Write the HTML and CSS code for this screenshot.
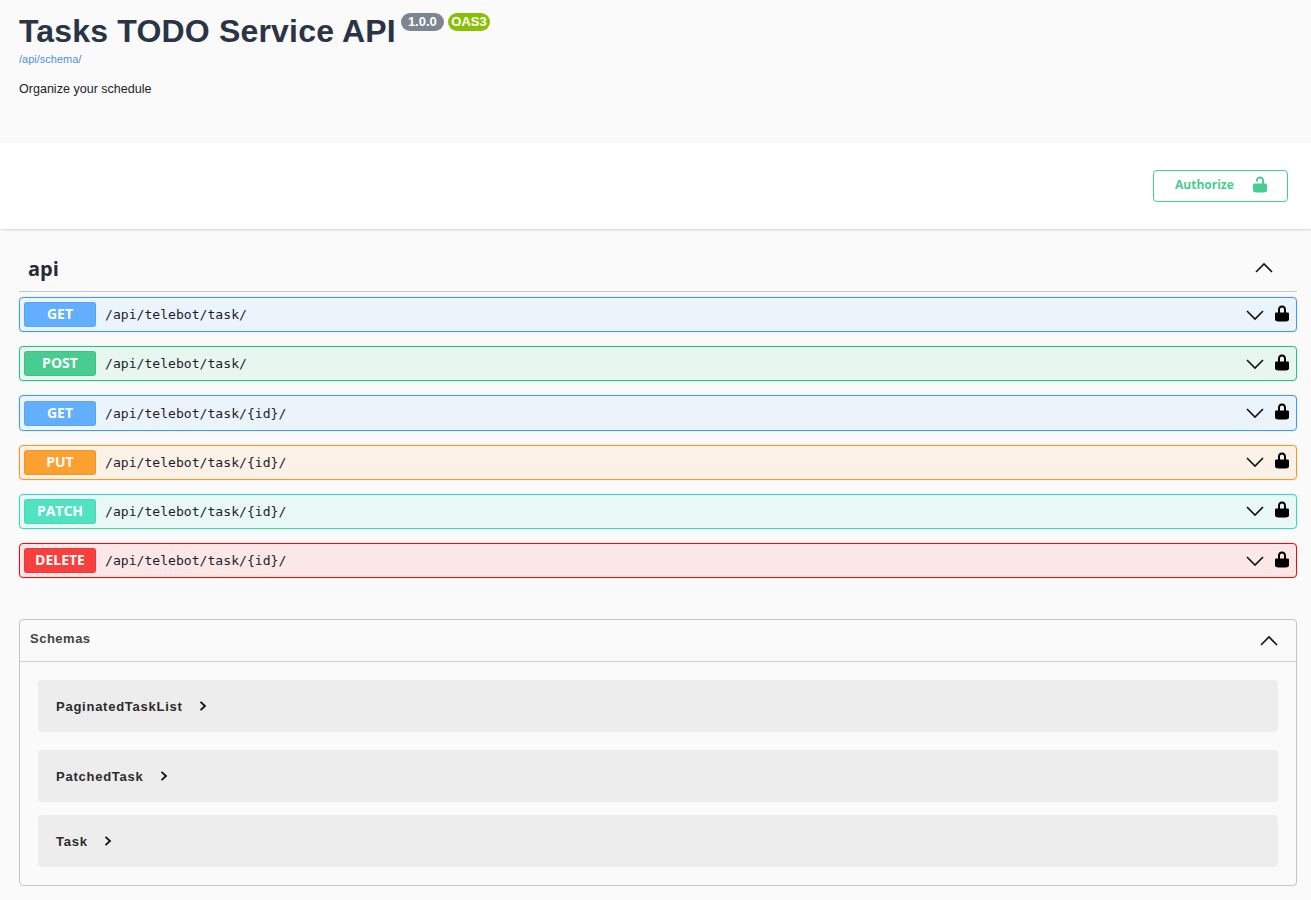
FILE: index.html
```html
<!DOCTYPE html>
<html>
<head>
  <title>Tasks TODO Service API</title>
  <link rel="stylesheet" href="styles.css">
</head>
<body>
  <svg class="sprites" width="0" height="0">
    <symbol id="locked" viewBox="0 0 20 20"><path d="M15.8 8.5H14V6C14 3.2 12.7 1.5 10 1.5 7.3 1.5 6 3.2 6 6V8.5H4.2C3.6 8.5 3 9.1 3 9.7V15.6c0 .5.4 1.1 1 1.3l1.1.3c.5.2 1.3.3 1.9.3h6c.6 0 1.4-.1 1.9-.3l1.1-.3c.6-.2 1-.8 1-1.3V9.7C17 9.1 16.4 8.5 15.8 8.5zM12 8.5H8V5.6C8 4.2 8.8 3.5 10 3.5s2 .7 2 2.1V8.5z"/></symbol>
    <symbol id="unlocked" viewBox="0 0 20 20"><path d="M15.8 8.5H14V6C14 3.2 12.7 1.5 10 1.5 7.3 1.5 6 3.2 6 6V6.5h2V5.6C8 4.2 8.8 3.5 10 3.5s2 .7 2 2.1V8.5H4.2C3.6 8.5 3 9.1 3 9.7V15.6c0 .5.4 1.1 1 1.3l1.1.3c.5.2 1.3.3 1.9.3h6c.6 0 1.4-.1 1.9-.3l1.1-.3c.6-.2 1-.8 1-1.3V9.7C17 9.1 16.4 8.5 15.8 8.5z"/></symbol>
    <symbol id="up" viewBox="0 0 20 20"><path d="M2 14 L10 6 L18 14"/></symbol>
    <symbol id="down" viewBox="0 0 20 20"><path d="M2 6 L10 14 L18 6"/></symbol>
    <symbol id="right" viewBox="0 0 20 20"><path d="M7.5 5.8 L12 10 L7.5 14.2"/></symbol>
  </svg>

  <section class="info">
    <div class="title-row">
      <h1>Tasks TODO Service API</h1>
      <span class="badge version">1.0.0</span>
      <span class="badge oas">OAS3</span>
    </div>
    <a class="schema-link" href="#">/api/schema/</a>
    <p class="description">Organize your schedule</p>
  </section>

  <section class="auth-bar">
    <button class="authorize" type="button">
      <span>Authorize</span>
      <svg width="20" height="20"><use href="#unlocked"/></svg>
    </button>
  </section>

  <section class="tag-section">
    <div class="tag-head">
      <h2>api</h2>
      <svg class="arrow" width="20" height="20"><use href="#up"/></svg>
    </div>

    <div class="op get">
      <span class="method">GET</span>
      <span class="path">/api/telebot/task/</span>
      <svg class="arrow" width="20" height="20"><use href="#down"/></svg>
      <svg class="lock" width="20" height="20"><use href="#locked"/></svg>
    </div>
    <div class="op post">
      <span class="method">POST</span>
      <span class="path">/api/telebot/task/</span>
      <svg class="arrow" width="20" height="20"><use href="#down"/></svg>
      <svg class="lock" width="20" height="20"><use href="#locked"/></svg>
    </div>
    <div class="op get">
      <span class="method">GET</span>
      <span class="path">/api/telebot/task/{id}/</span>
      <svg class="arrow" width="20" height="20"><use href="#down"/></svg>
      <svg class="lock" width="20" height="20"><use href="#locked"/></svg>
    </div>
    <div class="op put">
      <span class="method">PUT</span>
      <span class="path">/api/telebot/task/{id}/</span>
      <svg class="arrow" width="20" height="20"><use href="#down"/></svg>
      <svg class="lock" width="20" height="20"><use href="#locked"/></svg>
    </div>
    <div class="op patch">
      <span class="method">PATCH</span>
      <span class="path">/api/telebot/task/{id}/</span>
      <svg class="arrow" width="20" height="20"><use href="#down"/></svg>
      <svg class="lock" width="20" height="20"><use href="#locked"/></svg>
    </div>
    <div class="op delete">
      <span class="method">DELETE</span>
      <span class="path">/api/telebot/task/{id}/</span>
      <svg class="arrow" width="20" height="20"><use href="#down"/></svg>
      <svg class="lock" width="20" height="20"><use href="#locked"/></svg>
    </div>
  </section>

  <section class="schemas">
    <div class="schemas-head">
      <h4>Schemas</h4>
      <svg class="arrow" width="20" height="20"><use href="#up"/></svg>
    </div>
    <div class="schemas-body">
      <div class="model first">
        <span>PaginatedTaskList</span>
        <svg class="chevron" width="20" height="20"><use href="#right"/></svg>
      </div>
      <div class="model second">
        <span>PatchedTask</span>
        <svg class="chevron" width="20" height="20"><use href="#right"/></svg>
      </div>
      <div class="model">
        <span>Task</span>
        <svg class="chevron" width="20" height="20"><use href="#right"/></svg>
      </div>
    </div>
  </section>
</body>
</html>
```

FILE: styles.css
```css
/* page */
body {
  margin: 0;
  font-family: "Open Sans", "Liberation Sans", sans-serif;
  background-color: #fafafa;
  color: #3b4151;
}
.sprites {
  display: block;
  height: 0;
}

/* info block */
.info {
  height: 143px;
  box-sizing: border-box;
  padding: 12px 19px 0;
}
.title-row {
  display: flex;
  align-items: flex-start;
  height: 39px;
}
h1 {
  margin: 0 1px 0 0;
  font-size: 32px;
  line-height: 38px;
  letter-spacing: 0.18px;
  font-weight: 700;
  font-family: "Liberation Sans", sans-serif;
  color: #2b3446;
}
.badge {
  margin-left: 4px;
  height: 18px;
  line-height: 18px;
  border-radius: 9px;
  font-size: 13px;
  font-weight: 700;
  font-family: "Liberation Sans", sans-serif;
  color: #fff;
  margin-top: 1px;
}
.version {
  padding: 0 7px;
  background-color: #7d8492;
}
.oas {
  padding: 0 3.5px;
  background-color: #89bf04;
}
.schema-link {
  display: block;
  margin-top: 2px;
  font-size: 11px;
  font-family: "Liberation Sans", sans-serif;
  color: #4990e2;
  text-decoration: none;
}
.description {
  margin: 17px 0 0;
  font-size: 12.55px;
  font-family: "Liberation Sans", sans-serif;
  color: #222;
}

/* authorize */
.auth-bar {
  display: flex;
  justify-content: flex-end;
  align-items: center;
  height: 86px;
  padding-right: 23px;
  background-color: #fff;
  box-shadow: 0 1px 2px rgba(0, 0, 0, 0.15);
}
.authorize {
  display: flex;
  align-items: center;
  justify-content: space-between;
  width: 135px;
  height: 32px;
  box-sizing: border-box;
  padding: 0 17px 3px 21px;
  background: transparent;
  border: 1px solid #49cc90;
  border-radius: 4px;
  color: #49cc90;
  font-size: 12px;
  font-weight: 700;
  font-family: "Open Sans", sans-serif;
}
.authorize svg {
  fill: #49cc90;
}

/* api tag */
.tag-section {
  padding: 16px 14px 0 19px;
}
.tag-head {
  display: flex;
  align-items: center;
  justify-content: space-between;
  height: 46px;
  padding: 0 23px 0 9px;
  border-bottom: 1px solid #c4c5c8;
  margin-bottom: 5px;
}
h2 {
  margin: 0;
  font-size: 20px;
  font-weight: 700;
  color: #262b36;
}
.arrow {
  fill: none;
  stroke: #111;
  stroke-width: 1.6;
}
.chevron {
  fill: none;
  stroke: #111;
  stroke-width: 1.8;
  margin-left: 10px;
}

/* operations */
.op {
  display: flex;
  align-items: center;
  height: 35.3px;
  box-sizing: border-box;
  margin-bottom: 13.9px;
  padding: 0 4px 0 4px;
  border: 1px solid;
  border-radius: 4px;
  box-shadow: 0 0 2px rgba(0, 0, 0, 0.15);
}
.method {
  width: 72px;
  height: 25px;
  box-sizing: border-box;
  line-height: 23px;
  text-align: center;
  border-radius: 3px;
  font-size: 14px;
  font-weight: 700;
  color: #fff;
  font-family: "Open Sans", sans-serif;
  box-shadow: inset 0 0 0 1px rgba(0, 0, 0, 0.06);
}
.path {
  flex: 1;
  margin-left: 9px;
  font-size: 13.1px;
  font-weight: 400;
  font-family: "DejaVu Sans Mono", monospace;
  color: #1c1c2b;
}
.lock {
  margin: 0 0 2px 7px;
  fill: #000;
}
.get { border-color: #3d9df5; background-color: #ebf3fb; }
.get .method { background-color: #61affe; }
.post { border-color: #1ac788; background-color: #e8f6f0; }
.post .method { background-color: #49cc90; }
.put { border-color: #fc9a20; background-color: #fbf1e6; }
.put .method { background-color: #fca130; }
.patch { border-color: #2ce0bc; background-color: #e9f8f5; }
.patch .method { background-color: #50e3c2; }
.delete { border-color: #f30a0a; background-color: #fbe7e7; }
.delete .method { background-color: #f93e3e; }

/* schemas */
.schemas {
  margin: 41px 14px 0 19px;
  border: 1px solid #c3c4c7;
  border-radius: 4px;
}
.schemas-head {
  display: flex;
  align-items: center;
  justify-content: space-between;
  height: 41px;
  padding: 0 17px 0 10px;
  border-bottom: 1px solid #cfd0d2;
}
h4 {
  margin: 0 0 4px;
  font-size: 13px;
  letter-spacing: 0.5px;
  font-weight: 700;
  font-family: "Liberation Sans", sans-serif;
  color: #444;
}
.schemas-body {
  padding: 18px 18px 18px;
}
.model {
  display: flex;
  align-items: center;
  height: 52px;
  padding: 0 18px;
  margin-bottom: 13px;
  background-color: #ededed;
  border-radius: 4px;
  font-size: 13px;
  letter-spacing: 0.75px;
  font-weight: 700;
  font-family: "Liberation Sans", sans-serif;
  color: #2b2b2b;
}
.model.first {
  margin-bottom: 18px;
}
.model:last-child {
  margin-bottom: 0;
}
```
